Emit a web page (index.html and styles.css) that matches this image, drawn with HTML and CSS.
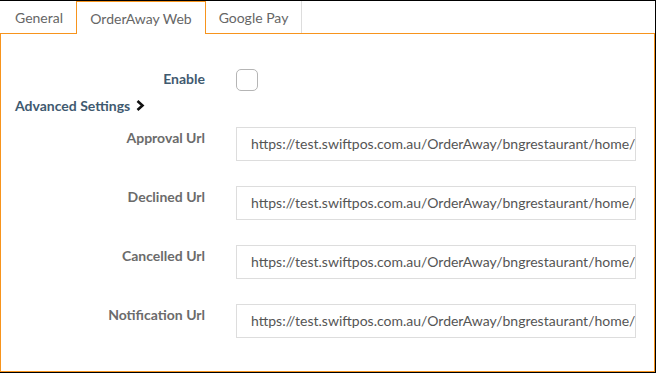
FILE: index.html
```html
<!DOCTYPE html>
<html>
<head>
<meta charset="utf-8">
<link rel="stylesheet" href="styles.css">
</head>
<body>
<div class="frame">
  <div class="tabs">
    <div class="tab">General</div>
    <div class="tab active">OrderAway Web</div>
    <div class="tab last">Google Pay</div>
  </div>
  <div class="panel">
    <div class="row enable-row">
      <div class="label dark">Enable</div>
      <div class="checkbox"></div>
    </div>
    <div class="advanced">Advanced Settings
      <svg class="chev" width="9" height="11" viewBox="0 0 9 11"><path d="M1.5 1 L6.5 5.5 L1.5 10" fill="none" stroke="#111" stroke-width="2.6"/></svg>
    </div>
    <div class="urls">
      <div class="row url-row">
        <div class="label">Approval Url</div>
        <div class="input">https://test.swiftpos.com.au/OrderAway/bngrestaurant/home/approved</div>
      </div>
      <div class="row url-row">
        <div class="label">Declined Url</div>
        <div class="input">https://test.swiftpos.com.au/OrderAway/bngrestaurant/home/declined</div>
      </div>
      <div class="row url-row">
        <div class="label">Cancelled Url</div>
        <div class="input">https://test.swiftpos.com.au/OrderAway/bngrestaurant/home/cancelled</div>
      </div>
      <div class="row url-row">
        <div class="label">Notification Url</div>
        <div class="input">https://test.swiftpos.com.au/OrderAway/bngrestaurant/home/notification</div>
      </div>
    </div>
  </div>
</div>
</body>
</html>
```
FILE: styles.css
```css
* { box-sizing: border-box; }
body {
  margin: 0;
  font-family: "Lato", "Open Sans", sans-serif;
  background: #fff;
}
.frame {
  width: 656px;
  height: 373px;
  border-top: 1px solid #000;
  border-right: 1px solid #000;
  border-bottom: 1px solid #000;
  display: flex;
  flex-direction: column;
}
.tabs {
  display: flex;
  height: 32px;
}
.tab {
  height: 32px;
  padding: 0 14px 0 15px;
  display: flex;
  align-items: center;
  font-size: 14px;
  color: #666;
}
.tab:first-child { width: 76px; }
.tab.active {
  width: 130px;
  border: 1px solid #f7941d;
  border-bottom: none;
  height: 33px;
  margin-bottom: -1px;
  background: #fff;
  position: relative;
  z-index: 1;
  justify-content: center;
  padding: 0;
}
.tab.last {
  width: 96px;
  border-right: 1px solid #ddd;
  justify-content: center;
  padding: 0;
}
.panel {
  flex: 1;
  border: 1px solid #f7941d;
  padding-top: 35px;
}
.row {
  display: flex;
  align-items: flex-start;
}
.label {
  width: 204px;
  text-align: right;
  font-size: 14px;
  font-weight: 700;
  color: #6b6b6b;
  flex-shrink: 0;
}
.label.dark { color: #3f5a70; }
.enable-row .label { padding-top: 1px; }
.checkbox {
  margin-left: 31px;
  width: 22px;
  height: 22px;
  border: 1.5px solid #b5b5b5;
  border-radius: 5px;
}
.advanced {
  margin: 3px 0 0 14px;
  font-size: 14px;
  font-weight: 700;
  color: #3f5a70;
  display: flex;
  align-items: center;
  gap: 6px;
  height: 22px;
}
.chev { margin-top: 1px; }
.urls {
  margin-top: 11px;
  display: flex;
  flex-direction: column;
  gap: 25px;
}
.url-row .label { padding-top: 2px; }
.input {
  margin-left: 31px;
  width: 400px;
  height: 34px;
  border: 1px solid #ddd;
  padding: 0 0 0 14px;
  font-size: 14px;
  color: #555;
  line-height: 32px;
  white-space: nowrap;
  overflow: hidden;
}
```
